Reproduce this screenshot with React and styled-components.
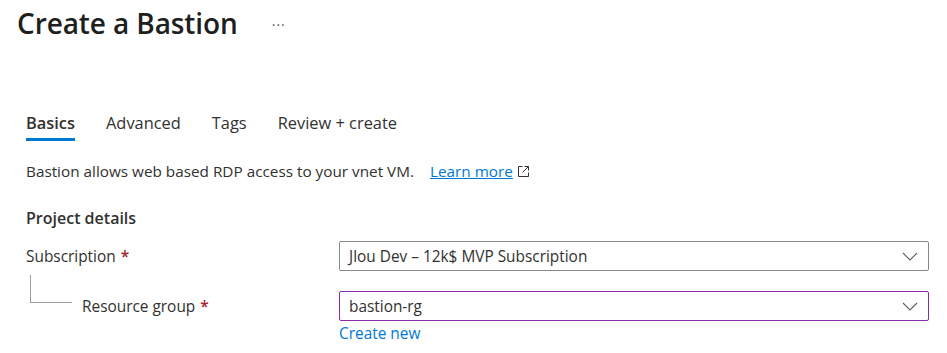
import React from 'react';
import styled, { createGlobalStyle } from 'styled-components';

const GlobalStyle = createGlobalStyle`
  body {
    margin: 0;
    background: #ffffff;
    font-family: "Open Sans", "Noto Sans", sans-serif;
    color: #323130;
  }
`

const Page = styled.div`
  width: 947px;
  height: 353px;
  overflow: hidden;
  background: #fff;
`

const Header = styled.div`
  display: flex;
  align-items: center;
  padding: 4px 0 0 17px;
  height: 38px;
`

const Title = styled.h1`
  margin: 0;
  font-size: 28px;
  font-weight: 600;
  color: #201f1e;
  letter-spacing: -0.1px;
`

const More = styled.span`
  margin-left: 34px;
  font-size: 14px;
  color: #605e5c;
  letter-spacing: 1px;
  padding-top: 2px;
`

const Body = styled.div`
  padding: 0 0 0 26px;
`

const Tabs = styled.div`
  display: flex;
  gap: 31px;
  margin-top: 69px;
  height: 39px;
`

const Tab = styled.div`
  position: relative;
  font-size: 16.4px;
  line-height: 22px;
  padding-top: 1px;
  color: #323130;
  font-weight: ${({ active }) => (active ? 600 : 400)};
  &::after {
    content: '';
    display: ${({ active }) => (active ? 'block' : 'none')};
    position: absolute;
    left: 0;
    right: 0;
    top: 27px;
    height: 3px;
    background: #0078d4;
  }
`

const Desc = styled.p`
  margin: 11px 0 0;
  font-size: 15.3px;
  line-height: 20px;
  display: flex;
  align-items: center;
`

const Link = styled.a`
  color: #0078d4;
  text-decoration: underline;
  margin-left: 16px;
`

const ExtIcon = styled.svg`
  margin-left: 4px;
  width: 13px;
  height: 13px;
`

const Section = styled.h2`
  margin: 27px 0 0;
  font-size: 16px;
  font-weight: 600;
  line-height: 20px;
  color: #323130;
`

const Form = styled.div`
  margin-top: 13px;
  display: grid;
  grid-template-columns: 313px 590px;
  row-gap: 20px;
  align-items: start;
`

const Label = styled.div`
  position: relative;
  display: flex;
  align-items: center;
  height: 30px;
  font-size: 15.4px;
  padding-left: ${({ indent }) => (indent ? '56px' : '0')};
`

const Star = styled.span`
  color: #a4262c;
  margin-left: 5px;
  font-weight: 600;
`

const Tree = styled.span`
  position: absolute;
  left: 4px;
  top: -16px;
  width: 41px;
  height: 27px;
  border-left: 1px solid #a19f9d;
  border-bottom: 1px solid #a19f9d;
`

const Field = styled.div`
  display: flex;
  flex-direction: column;
`

const Select = styled.div`
  height: 30px;
  box-sizing: border-box;
  border: 1px solid ${({ focused }) => (focused ? '#8a2da5' : '#8a8886')};
  border-radius: 2px;
  display: flex;
  align-items: center;
  justify-content: space-between;
  padding: 0 10px 0 9px;
  font-size: 15.4px;
  color: #323130;
`

const Chevron = () => (
  <svg width="16" height="9" viewBox="0 0 16 9" fill="none">
    <path d="M1 1l7 7 7-7" stroke="#605e5c" strokeWidth="1.1" />
  </svg>
)

const CreateNew = styled.a`
  color: #0078d4;
  font-size: 15.4px;
  line-height: 20px;
  margin-top: 3px;
`

export default function App() {
  return (
    <Page>
      <GlobalStyle />
      <Header>
        <Title>Create a Bastion</Title>
        <More>···</More>
      </Header>
      <Body>
        <Tabs>
          <Tab active>Basics</Tab>
          <Tab>Advanced</Tab>
          <Tab>Tags</Tab>
          <Tab>Review + create</Tab>
        </Tabs>
        <Desc>
          Bastion allows web based RDP access to your vnet VM.
          <Link>Learn more</Link>
          <ExtIcon viewBox="0 0 13 13" fill="none" stroke="#323130" strokeWidth="1">
            <path d="M5.5 1.5h-4v10h10v-4" />
            <path d="M7.5 1.5h4v4M11.5 1.5l-6 6" />
          </ExtIcon>
        </Desc>
        <Section>Project details</Section>
        <Form>
          <Label>
            Subscription<Star>*</Star>
          </Label>
          <Select>
            <span>Jlou Dev – 12k$ MVP Subscription</span>
            <Chevron />
          </Select>
          <Label indent>
            <Tree />
            Resource group<Star>*</Star>
          </Label>
          <Field>
            <Select focused>
              <span>bastion-rg</span>
              <Chevron />
            </Select>
            <CreateNew>Create new</CreateNew>
          </Field>
        </Form>
      </Body>
    </Page>
  )
}
